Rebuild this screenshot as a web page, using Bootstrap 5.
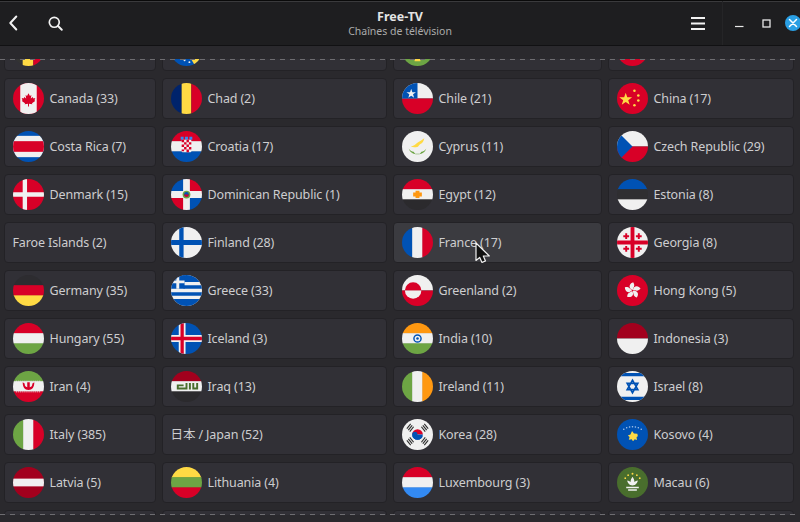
<!DOCTYPE html>
<html lang="fr">
<head>
<meta charset="utf-8">
<title>Free-TV</title>
<link href="https://cdn.jsdelivr.net/npm/bootstrap@5.3.0/dist/css/bootstrap.min.css" rel="stylesheet">
<style>
html,body{height:100%;margin:0;overflow:hidden;background:#2a292d;font-family:"Noto Sans","Noto Sans CJK JP",sans-serif;}
.app-frame{width:800px;height:522px;position:relative;overflow:hidden;}
.title-bar{height:46px;flex:none;background:#1e1e20;border-top:1px solid #0a0a0a;border-bottom:1px solid #111113;box-shadow:inset 0 1px 0 #3a3a3c;}
.side-l,.side-r{flex:1 1 0;height:100%;}
.title-box{text-align:center;line-height:15px;margin-top:1px;}
.title-main{font-size:12.5px;font-weight:700;color:#e4e4e4;}
.title-sub{font-size:10.5px;color:#ababab;}
.tb-ic{display:block;flex:none;}
.ic-back{margin-left:7px;}
.ic-search{margin-left:27px;}
.wctl-group{height:100%;margin-left:17px;border-left:1px solid #252527;}
.ic-min{margin-left:12px;}
.ic-max{margin-left:18px;}
.ic-close{margin-left:14px;margin-right:-1px;}
.scroll-wrap{margin-top:13px;height:456px;flex:none;overflow:hidden;position:relative;padding:0 5px 0 4px;}
.scroll-wrap::before,.scroll-wrap::after{content:"";position:absolute;left:0;right:0;height:1px;z-index:2;background:repeating-linear-gradient(90deg,#6e6d71 0 5px,transparent 5px 10px);}
.scroll-wrap::before{top:0;}
.scroll-wrap::after{bottom:0;}
.chan-grid{display:grid;grid-template-columns:152px 225px 208px 187px;column-gap:6px;row-gap:7px;grid-auto-rows:41px;margin-top:-29px;}
.chan-grid>:nth-child(4n+3){margin-right:-1px;}
.chan-grid>:nth-child(4n){margin-left:1px;}
.chan-item{display:flex;align-items:center;gap:6px;padding:0 7.5px;background:#313036;border:1px solid #232226;border-radius:4px;color:#cdcdcf;font-size:12.5px;letter-spacing:-.12px;white-space:nowrap;text-align:left;--bs-btn-hover-bg:#3b3b40;}
.chan-item span{padding-top:2px;}
.chan-item.is-hover{background:#3b3b40;}
.flag-ic{width:31px;height:31px;border-radius:50%;flex:none;display:block;}
.cursor-ic{position:absolute;left:474px;top:242px;z-index:5;}
</style>
</head>
<body>
<div class="app-frame d-flex flex-column">
<header class="title-bar d-flex align-items-center">
  <div class="side-l d-flex align-items-center">
    <svg class="tb-ic ic-back" width="14" height="18" viewBox="0 0 14 18"><path d="M9.300 2.500 3.300 9l6 6.500" fill="none" stroke="#f2f2f2" stroke-width="2" stroke-linecap="round" stroke-linejoin="round"/></svg>
    <svg class="tb-ic ic-search" width="15" height="15" viewBox="0 0 16 16"><circle cx="6.700" cy="6.700" r="5.300" fill="none" stroke="#f2f2f2" stroke-width="1.800"/><path d="m10.700 10.700 4 4" stroke="#f2f2f2" stroke-width="2" stroke-linecap="round"/></svg>
  </div>
  <div class="title-box">
    <div class="title-main">Free-TV</div>
    <div class="title-sub">Chaînes de télévision</div>
  </div>
  <div class="side-r d-flex align-items-center justify-content-end">
    <svg class="tb-ic" width="14" height="13" viewBox="0 0 14 13"><path d="M0 1h14M0 6.500h14M0 12h14" stroke="#f2f2f2" stroke-width="1.800"/></svg>
    <div class="wctl-group d-flex align-items-center">
      <svg class="tb-ic ic-min" width="9" height="9" viewBox="0 0 9 9"><path d="M0 7.500h8.500" stroke="#e8e8e8" stroke-width="1.200"/></svg>
      <svg class="tb-ic ic-max" width="9" height="9" viewBox="0 0 9 9"><rect x="1" y="1" width="7" height="7" fill="none" stroke="#e8e8e8" stroke-width="1.300"/></svg>
      <svg class="tb-ic ic-close" width="16" height="16" viewBox="0 0 16 16"><circle cx="8" cy="8" r="8" fill="#2a9fe4"/><path d="m4.500 4.500 7 7m0-7-7 7" stroke="#fff" stroke-width="1.500" stroke-linecap="round"/></svg>
    </div>
  </div>
</header>
<main class="scroll-wrap">
<div class="chan-grid">
  <div class="chan-item"><svg class="flag-ic" viewBox="0 0 32 32"><rect width="11" height="32" fill="#333"/><rect x="10" width="11" height="32" fill="#ffda44"/><rect x="21" width="11" height="32" fill="#d80027"/></svg></div>
  <div class="chan-item"><svg class="flag-ic" viewBox="0 0 32 32"><rect width="32" height="32" fill="#0052b4"/><path d="M6 0h26v32h-7z" fill="#ffda44"/><g fill="#f0f0f0"><circle cx="14" cy="26" r="1"/><circle cx="19" cy="28" r="1"/></g></svg></div>
  <div class="chan-item"><svg class="flag-ic" viewBox="0 0 32 32"><rect width="32" height="32" fill="#6da544"/><path d="M13 24h6v3h-6z" fill="#ffda44"/></svg></div>
  <div class="chan-item"><svg class="flag-ic" viewBox="0 0 32 32"><rect width="32" height="32" fill="#d80027"/></svg></div>

  <button class="btn chan-item" type="button"><svg class="flag-ic" viewBox="0 0 32 32"><rect width="32" height="32" fill="#d80027"/><rect x="7.500" width="17" height="32" fill="#f0f0f0"/><path d="m16 10.500 1.500 2.800 1.500-.8-.6 3.400 2-1.500.6 1.500 2-.3-.8 2.300.7.600-3.300 2.300.4 1.200-3.500-.5v2.800h-1v-2.800l-3.500.5.400-1.200-3.300-2.300.7-.6-.8-2.300 2 .3.600-1.500 2 1.500-.6-3.400 1.500.8z" fill="#d80027"/></svg><span>Canada (33)</span></button>
  <button class="btn chan-item" type="button"><svg class="flag-ic" viewBox="0 0 32 32"><rect width="11" height="32" fill="#00236b"/><rect x="11" width="10" height="32" fill="#ffda44"/><rect x="21" width="11" height="32" fill="#d80027"/></svg><span>Chad (2)</span></button>
  <button class="btn chan-item" type="button"><svg class="flag-ic" viewBox="0 0 32 32"><rect width="32" height="16" fill="#f0f0f0"/><rect y="16" width="32" height="16" fill="#d80027"/><rect width="16" height="16" fill="#0052b4"/><path d="m9.500 6 1.200 3.500h3.700l-3 2.200 1.100 3.500-3-2.100-3 2.100 1.100-3.500-3-2.200h3.700z" fill="#f0f0f0"/></svg><span>Chile (21)</span></button>
  <button class="btn chan-item" type="button"><svg class="flag-ic" viewBox="0 0 32 32"><rect width="32" height="32" fill="#d80027"/><path d="m9 10 1.600 4.700h5l-4 3 1.500 4.800-4.100-3-4.100 3 1.500-4.800-4-3h5z" fill="#ffda44"/><circle cx="18" cy="8" r="1.300" fill="#ffda44"/><circle cx="22" cy="13" r="1.300" fill="#ffda44"/><circle cx="22" cy="18" r="1.300" fill="#ffda44"/><circle cx="18" cy="23" r="1.300" fill="#ffda44"/></svg><span>China (17)</span></button>

  <button class="btn chan-item" type="button"><svg class="flag-ic" viewBox="0 0 32 32"><rect width="32" height="32" fill="#0052b4"/><rect y="5" width="32" height="22" fill="#f0f0f0"/><rect y="10.500" width="32" height="11" fill="#d80027"/></svg><span>Costa Rica (7)</span></button>
  <button class="btn chan-item" type="button"><svg class="flag-ic" viewBox="0 0 32 32"><rect width="32" height="11" fill="#d80027"/><rect y="10.500" width="32" height="11" fill="#f0f0f0"/><rect y="21" width="32" height="11" fill="#0052b4"/><path d="M10 6h3v3h-3zM14.500 6h3v3h-3zM19 6h3v3h-3z" fill="#338af3"/><rect x="11" y="9" width="10" height="13" rx="1" fill="#f0f0f0"/><path d="M11 9h2.500v2.500H11zM16 9h2.500v2.500H16zM13.500 11.500H16V14h-2.500zM18.500 11.500H21V14h-2.500zM11 14h2.500v2.500H11zM16 14h2.500v2.500H16zM13.500 16.500H16V19h-2.500zM18.500 16.500H21V19h-2.500zM11 19h2.500v2H11zM16 19h2.500v3H16z" fill="#d80027"/></svg><span>Croatia (17)</span></button>
  <button class="btn chan-item" type="button"><svg class="flag-ic" viewBox="0 0 32 32"><rect width="32" height="32" fill="#f0f0f0"/><path d="M9 16c3-.5 4.500-1.500 6.500-3.500 2-1.500 4.500-2.500 7.500-5-.5 3-2 5-4 6-2 1.500-2 3-3.500 3-2 .5-4.500.5-6.500-.5z" fill="#ffda44"/><path d="M7 18c1 4 4.500 6 9 6s8-2 9-6c-1 2-3 3-5 3.500l-1.500 2h-5L12 21.500C10 21 8 20 7 18z" fill="#6da544"/></svg><span>Cyprus (11)</span></button>
  <button class="btn chan-item" type="button"><svg class="flag-ic" viewBox="0 0 32 32"><rect width="32" height="16" fill="#f0f0f0"/><rect y="16" width="32" height="16" fill="#d80027"/><path d="M0 0 16 16 0 32z" fill="#0052b4"/></svg><span>Czech Republic (29)</span></button>

  <button class="btn chan-item" type="button"><svg class="flag-ic" viewBox="0 0 32 32"><rect width="32" height="32" fill="#d80027"/><path d="M10 0h4.500v32H10zM0 13.800h32v4.400H0z" fill="#f0f0f0"/></svg><span>Denmark (15)</span></button>
  <button class="btn chan-item" type="button"><svg class="flag-ic" viewBox="0 0 32 32"><rect width="16" height="16" fill="#0052b4"/><rect x="16" width="16" height="16" fill="#d80027"/><rect y="16" width="16" height="16" fill="#d80027"/><rect x="16" y="16" width="16" height="16" fill="#0052b4"/><path d="M12.500 0h7v32h-7zM0 12.500h32v7H0z" fill="#f0f0f0"/><circle cx="16" cy="16" r="4" fill="#6da544"/><circle cx="16" cy="16" r="2.500" fill="#0052b4"/><path d="M13.500 16h5a2.500 2.500 0 0 1-5 0z" fill="#d80027"/></svg><span>Dominican Republic (1)</span></button>
  <button class="btn chan-item" type="button"><svg class="flag-ic" viewBox="0 0 32 32"><rect width="32" height="11" fill="#d80027"/><rect y="10.500" width="32" height="11" fill="#f0f0f0"/><rect y="21" width="32" height="11" fill="#2b2a2d"/><path d="M14 12h4v2h2.500v4H18v1.500h-4V18h-2.500v-4H14z" fill="#ff9811"/></svg><span>Egypt (12)</span></button>
  <button class="btn chan-item" type="button"><svg class="flag-ic" viewBox="0 0 32 32"><rect width="32" height="11" fill="#0052b4"/><rect y="10.500" width="32" height="11" fill="#2f2e31"/><rect y="21" width="32" height="11" fill="#f0f0f0"/></svg><span>Estonia (8)</span></button>

  <button class="btn chan-item" type="button"><span>Faroe Islands (2)</span></button>
  <button class="btn chan-item" type="button"><svg class="flag-ic" viewBox="0 0 32 32"><rect width="32" height="32" fill="#f0f0f0"/><path d="M8.500 0H13v32H8.500zM0 13.500h32v5H0z" fill="#0052b4"/></svg><span>Finland (28)</span></button>
  <button class="btn chan-item is-hover" type="button"><svg class="flag-ic" viewBox="0 0 32 32"><rect width="11" height="32" fill="#0052b4"/><rect x="10.500" width="11" height="32" fill="#f0f0f0"/><rect x="21" width="11" height="32" fill="#d80027"/></svg><span>France (17)</span></button>
  <button class="btn chan-item" type="button"><svg class="flag-ic" viewBox="0 0 32 32"><rect width="32" height="32" fill="#f0f0f0"/><path d="M14 0h4v32h-4zM0 14h32v4H0z" fill="#d80027"/><path d="M8.500 6.500h2v2h2v2h-2v2h-2v-2h-2v-2h2zM21.500 6.500h2v2h2v2h-2v2h-2v-2h-2v-2h2zM8.500 19.500h2v2h2v2h-2v2h-2v-2h-2v-2h2zM21.500 19.500h2v2h2v2h-2v2h-2v-2h-2v-2h2z" fill="#d80027"/></svg><span>Georgia (8)</span></button>

  <button class="btn chan-item" type="button"><svg class="flag-ic" viewBox="0 0 32 32"><rect width="32" height="11" fill="#2d2c30"/><rect y="10.500" width="32" height="11" fill="#d80027"/><rect y="21" width="32" height="11" fill="#ffda44"/></svg><span>Germany (35)</span></button>
  <button class="btn chan-item" type="button"><svg class="flag-ic" viewBox="0 0 32 32"><rect width="32" height="32" fill="#f0f0f0"/><path d="M13 3.500h19v3.600H13zM13 10.600h19v3.600H13zM0 17.700h32v3.600H0zM0 24.800h32V32H0zM0 0h32v3.500H0z" fill="#0052b4"/><rect width="14" height="14.200" fill="#0052b4"/><path d="M5.500 0h3v14.200h-3zM0 5.600h14v3H0z" fill="#f0f0f0"/></svg><span>Greece (33)</span></button>
  <button class="btn chan-item" type="button"><svg class="flag-ic" viewBox="0 0 32 32"><rect width="32" height="16" fill="#f0f0f0"/><rect y="16" width="32" height="16" fill="#d80027"/><path d="M3 16a8.500 8.500 0 0 1 17 0z" fill="#d80027"/><path d="M3 16a8.500 8.500 0 0 0 17 0z" fill="#f0f0f0"/></svg><span>Greenland (2)</span></button>
  <button class="btn chan-item" type="button"><svg class="flag-ic" viewBox="0 0 32 32"><rect width="32" height="32" fill="#d80027"/><g fill="#f0f0f0"><path id="hkp" d="M16 15.500c-2.500-1-3.500-3-2.800-5 .5-1.500 2-2.500 3.500-3 1 2 1.500 3 .8 4.500-.5 1-.8 2-1.500 3.500z"/><path d="M16 15.500c-2.500-1-3.500-3-2.800-5 .5-1.500 2-2.500 3.500-3 1 2 1.500 3 .8 4.500-.5 1-.8 2-1.500 3.500z" transform="rotate(72 16 16)"/><path d="M16 15.500c-2.500-1-3.500-3-2.800-5 .5-1.500 2-2.500 3.500-3 1 2 1.500 3 .8 4.500-.5 1-.8 2-1.500 3.500z" transform="rotate(144 16 16)"/><path d="M16 15.500c-2.500-1-3.500-3-2.800-5 .5-1.500 2-2.500 3.500-3 1 2 1.500 3 .8 4.500-.5 1-.8 2-1.500 3.500z" transform="rotate(216 16 16)"/><path d="M16 15.500c-2.500-1-3.500-3-2.800-5 .5-1.500 2-2.500 3.500-3 1 2 1.500 3 .8 4.500-.5 1-.8 2-1.500 3.500z" transform="rotate(288 16 16)"/></g></svg><span>Hong Kong (5)</span></button>

  <button class="btn chan-item" type="button"><svg class="flag-ic" viewBox="0 0 32 32"><rect width="32" height="11" fill="#d80027"/><rect y="10.500" width="32" height="11" fill="#f0f0f0"/><rect y="21" width="32" height="11" fill="#6da544"/></svg><span>Hungary (55)</span></button>
  <button class="btn chan-item" type="button"><svg class="flag-ic" viewBox="0 0 32 32"><rect width="32" height="32" fill="#0052b4"/><path d="M8 0h7v32H8zM0 12.500h32v7H0z" fill="#f0f0f0"/><path d="M9.800 0h3.400v32H9.800zM0 14.300h32v3.400H0z" fill="#d80027"/></svg><span>Iceland (3)</span></button>
  <button class="btn chan-item" type="button"><svg class="flag-ic" viewBox="0 0 32 32"><rect width="32" height="11" fill="#ff9811"/><rect y="10.500" width="32" height="11" fill="#f0f0f0"/><rect y="21" width="32" height="11" fill="#6da544"/><circle cx="16" cy="16" r="3.700" fill="none" stroke="#0052b4" stroke-width="1.500"/><circle cx="16" cy="16" r="1.300" fill="#0052b4"/></svg><span>India (10)</span></button>
  <button class="btn chan-item" type="button"><svg class="flag-ic" viewBox="0 0 32 32"><rect width="32" height="16" fill="#a2001d"/><rect y="16" width="32" height="16" fill="#f0f0f0"/></svg><span>Indonesia (3)</span></button>

  <button class="btn chan-item" type="button"><svg class="flag-ic" viewBox="0 0 32 32"><rect width="32" height="11" fill="#6da544"/><rect y="10.500" width="32" height="11" fill="#f0f0f0"/><rect y="21" width="32" height="11" fill="#d80027"/><path d="M10 11.500c0 5 2 8 6 8s6-3 6-8l-2 1.500c0 2.500-1 3.500-2.700 3.800V11.500h-2.600v5.300C13 16.500 12 15.500 12 13z" fill="#d80027"/><path d="M3 10.500h26M3 21.500h26" stroke="#f0f0f0" stroke-width="1" stroke-dasharray="1 1"/></svg><span>Iran (4)</span></button>
  <button class="btn chan-item" type="button"><svg class="flag-ic" viewBox="0 0 32 32"><rect width="32" height="11" fill="#a2001d"/><rect y="10.500" width="32" height="11" fill="#f0f0f0"/><rect y="21" width="32" height="11" fill="#2b2a2d"/><path d="M6 14h7v1.800H8v1.200h7v-4.500h2V19H6zM18.500 12.500h2V19h-2zM22 12.500h2v4.500h2v-4.500h2V19h-6z" fill="#496e2d"/></svg><span>Iraq (13)</span></button>
  <button class="btn chan-item" type="button"><svg class="flag-ic" viewBox="0 0 32 32"><rect width="11" height="32" fill="#6da544"/><rect x="10.500" width="11" height="32" fill="#f0f0f0"/><rect x="21" width="11" height="32" fill="#ff9811"/></svg><span>Ireland (11)</span></button>
  <button class="btn chan-item" type="button"><svg class="flag-ic" viewBox="0 0 32 32"><rect width="32" height="32" fill="#f0f0f0"/><path d="M0 2h32v3.500H0zM0 26.500h32V30H0z" fill="#0052b4"/><path d="m16 9.500 5.500 9.700h-11zM16 22.500l-5.500-9.700h11z" fill="none" stroke="#0052b4" stroke-width="1.700"/></svg><span>Israel (8)</span></button>

  <button class="btn chan-item" type="button"><svg class="flag-ic" viewBox="0 0 32 32"><rect width="11" height="32" fill="#6da544"/><rect x="10.500" width="11" height="32" fill="#f0f0f0"/><rect x="21" width="11" height="32" fill="#d80027"/></svg><span>Italy (385)</span></button>
  <button class="btn chan-item" type="button"><span>日本 / Japan (52)</span></button>
  <button class="btn chan-item" type="button"><svg class="flag-ic" viewBox="0 0 32 32"><rect width="32" height="32" fill="#f0f0f0"/><path d="M10.500 16a5.500 5.500 0 0 1 11 0z" fill="#d80027"/><path d="M10.500 16a5.500 5.500 0 0 0 11 0z" fill="#0052b4"/><path d="M10.500 16a2.750 2.750 0 0 1 5.500 0 2.750 2.750 0 0 0 5.500 0 5.500 5.500 0 0 1-11 0z" fill="#0052b4"/><g stroke="#333" stroke-width="1.200"><path d="m5 10 4-5M6.500 11.500l4-5M8 13l4-5M20 8l4 5M21.500 6.500l4 5M23 5l4 5M5 22l4 5M6.500 20.500l4 5M8 19l4 5M20 24l4-5M21.500 25.500l4-5M23 27l4-5"/></g></svg><span>Korea (28)</span></button>
  <button class="btn chan-item" type="button"><svg class="flag-ic" viewBox="0 0 32 32"><rect width="32" height="32" fill="#0052b4"/><path d="m15.500 12.500 2 2.500 3.500.3.500 2.400-1.300 1 .4 3-2.300-.7-1.800 1.900-1.300-1.900-3 .4.800-2.800-1.800-1.600 2.700-.9z" fill="#ffda44"/><g fill="#a9c6ec"><circle cx="7" cy="10.500" r=".8"/><circle cx="10" cy="9" r=".8"/><circle cx="13" cy="8.200" r=".8"/><circle cx="16" cy="8" r=".8"/><circle cx="19" cy="8.200" r=".8"/><circle cx="22" cy="9" r=".8"/><circle cx="25" cy="10.500" r=".8"/></g></svg><span>Kosovo (4)</span></button>

  <button class="btn chan-item" type="button"><svg class="flag-ic" viewBox="0 0 32 32"><rect width="32" height="32" fill="#a2001d"/><rect y="12" width="32" height="8" fill="#f0f0f0"/></svg><span>Latvia (5)</span></button>
  <button class="btn chan-item" type="button"><svg class="flag-ic" viewBox="0 0 32 32"><rect width="32" height="11" fill="#ffda44"/><rect y="10.500" width="32" height="11" fill="#6da544"/><rect y="21" width="32" height="11" fill="#d80027"/></svg><span>Lithuania (4)</span></button>
  <button class="btn chan-item" type="button"><svg class="flag-ic" viewBox="0 0 32 32"><rect width="32" height="11" fill="#d80027"/><rect y="10.500" width="32" height="11" fill="#f0f0f0"/><rect y="21" width="32" height="11" fill="#338af3"/></svg><span>Luxembourg (3)</span></button>
  <button class="btn chan-item" type="button"><svg class="flag-ic" viewBox="0 0 32 32"><rect width="32" height="32" fill="#496e2d"/><path d="M16 10c1.500 2 2 3.500 2 5.500 1-.8 2-1.300 3.500-1.500-.5 2.500-2 5-5.500 5s-5-2.500-5.500-5c1.500.2 2.500.7 3.500 1.500 0-2 .5-3.500 2-5.500z" fill="#f0f0f0"/><path d="M9.500 20.500h13V22h-13zM11.500 23h9v1.500h-9z" fill="#f0f0f0"/><g fill="#ffda44"><circle cx="16" cy="7" r="1"/><circle cx="11.500" cy="8.500" r=".9"/><circle cx="20.500" cy="8.500" r=".9"/><circle cx="8.500" cy="11.500" r=".9"/><circle cx="23.500" cy="11.500" r=".9"/></g></svg><span>Macau (6)</span></button>

  <div class="chan-item"></div><div class="chan-item"></div><div class="chan-item"></div><div class="chan-item"></div>
</div>
</main>
<svg class="cursor-ic" width="18" height="22" viewBox="0 0 18 22"><path d="M2 1v17.500l3.700-3 2.300 5 3.500-1.600-2.200-4.900h6z" fill="#111" stroke="#f2f2f2" stroke-width="1.200" stroke-linejoin="round"/></svg>
</div>
<script src="https://cdn.jsdelivr.net/npm/bootstrap@5.3.0/dist/js/bootstrap.bundle.min.js"></script>
</body>
</html>
